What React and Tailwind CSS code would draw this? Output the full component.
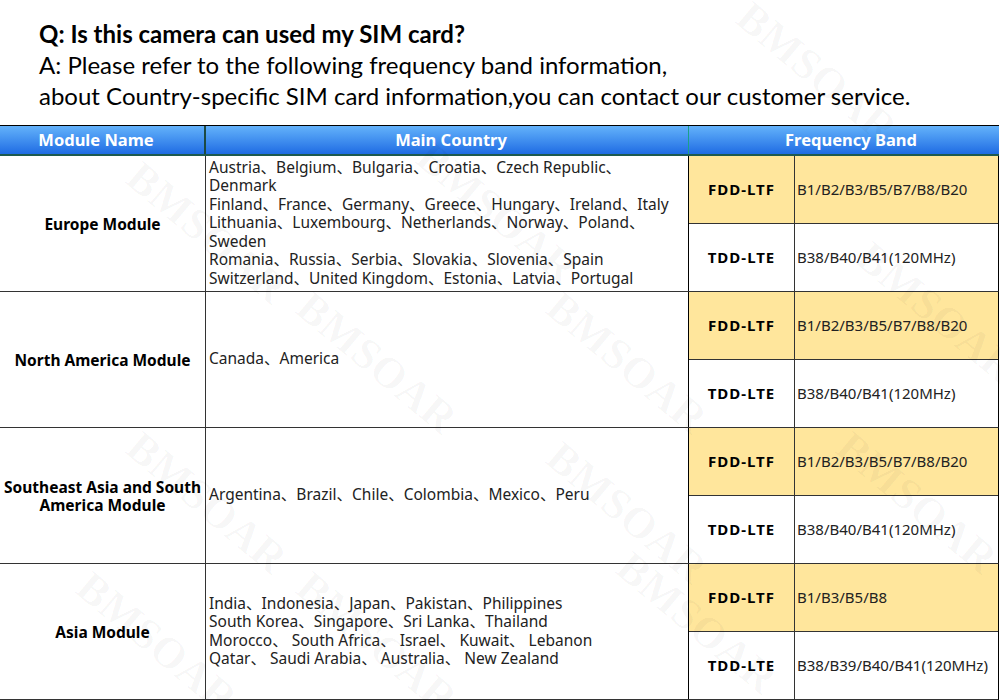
import React from "react";

const body = { fontFamily: '"Noto Sans", "Noto Sans CJK SC", sans-serif' };
const title = { fontFamily: 'Lato, "Open Sans", sans-serif' };

const modules = [
  {
    name: "Europe Module",
    lines: [
      "Austria、Belgium、Bulgaria、Croatia、Czech Republic、",
      "Denmark",
      "Finland、France、Germany、Greece、Hungary、Ireland、Italy",
      "Lithuania、Luxembourg、Netherlands、Norway、Poland、",
      "Sweden",
      "Romania、Russia、Serbia、Slovakia、Slovenia、Spain",
      "Switzerland、United Kingdom、Estonia、Latvia、Portugal",
    ],
    fdd: "B1/B2/B3/B5/B7/B8/B20",
    tdd: "B38/B40/B41(120MHz)",
  },
  {
    name: "North America Module",
    lines: ["Canada、America"],
    fdd: "B1/B2/B3/B5/B7/B8/B20",
    tdd: "B38/B40/B41(120MHz)",
  },
  {
    name: "Southeast Asia and South America Module",
    lines: ["Argentina、Brazil、Chile、Colombia、Mexico、Peru"],
    fdd: "B1/B2/B3/B5/B7/B8/B20",
    tdd: "B38/B40/B41(120MHz)",
  },
  {
    name: "Asia Module",
    lines: [
      "India、Indonesia、Japan、Pakistan、Philippines",
      "South Korea、Singapore、Sri Lanka、Thailand",
      "Morocco、 South Africa、 Israel、 Kuwait、 Lebanon",
      "Qatar、 Saudi Arabia、 Australia、 New Zealand",
    ],
    fdd: "B1/B3/B5/B8",
    tdd: "B38/B39/B40/B41(120MHz)",
  },
];

const marks = [
  [720, 40], [110, 200], [280, 330], [530, 330], [840, 280], [110, 470],
  [530, 480], [820, 470], [280, 610], [600, 590], [60, 610], [400, 180],
];

export default function App() {
  return (
    <div className="relative w-[1000px] h-[700px] overflow-hidden bg-white text-black">
      <div className="pl-[39px] pt-[18px] h-[125px]" style={title}>
        <div className="text-[24px] font-bold leading-[31px]">Q: Is this camera can used my SIM card?</div>
        <div className="text-[24px] leading-[31px]">A: Please refer to the following frequency band information,</div>
        <div className="text-[24px] leading-[31px]">about Country-specific SIM card information,you can contact our customer service.</div>
      </div>

      <div className="w-[999px]">
        <div
          className="grid grid-cols-[206px_483px_1fr] h-[31px] border-t border-black border-b-2 border-b-[#1d5a4f] bg-gradient-to-b from-[#64b2fa] to-[#1f6be3] text-white font-bold text-[16.5px]"
          style={body}
        >
          <div className="flex items-center justify-center pr-[12px] border-r-2 border-[#1c4a44]">Module Name</div>
          <div className="flex items-center justify-center pl-[8px] border-r border-[#1aa08a]">Main Country</div>
          <div className="flex items-center justify-center pl-[14px]">Frequency Band</div>
        </div>

        {modules.map((m, i) => (
          <div
            key={i}
            className="grid grid-cols-[206px_483px_106px_1fr] h-[136px] border-b border-[#333] border-r border-r-black"
            style={body}
          >
            <div className="flex items-center justify-center text-center px-[4px] text-[15.5px] font-bold leading-[18px] border-r border-[#333]">
              {m.name}
            </div>
            <div className="flex flex-col justify-center pl-[3px] pb-[2px] text-[15.5px] leading-[18.5px] text-[#222] border-r border-black whitespace-nowrap">
              {m.lines.map((l, j) => (
                <div key={j}>{l}</div>
              ))}
            </div>
            <div className="flex flex-col border-r border-[#333]">
              <div className="flex-1 flex items-center justify-center bg-[#ffe69c] font-bold text-[15px] tracking-[1px] border-b border-[#333]">FDD-LTF</div>
              <div className="flex-1 flex items-center justify-center font-bold text-[15px] tracking-[1px]">TDD-LTE</div>
            </div>
            <div className="flex flex-col text-[15px] text-[#222]">
              <div className="flex-1 flex items-center pl-[2px] bg-[#ffe69c] border-b border-[#333]">{m.fdd}</div>
              <div className="flex-1 flex items-center pl-[2px]">{m.tdd}</div>
            </div>
          </div>
        ))}
      </div>

      {marks.map(([x, y], k) => (
        <div
          key={k}
          className="absolute pointer-events-none text-[44px] font-bold text-black/[0.03] rotate-[40deg] select-none"
          style={{ left: x, top: y, fontFamily: '"Liberation Serif", serif' }}
        >
          BMSOAR
        </div>
      ))}
    </div>
  );
}
